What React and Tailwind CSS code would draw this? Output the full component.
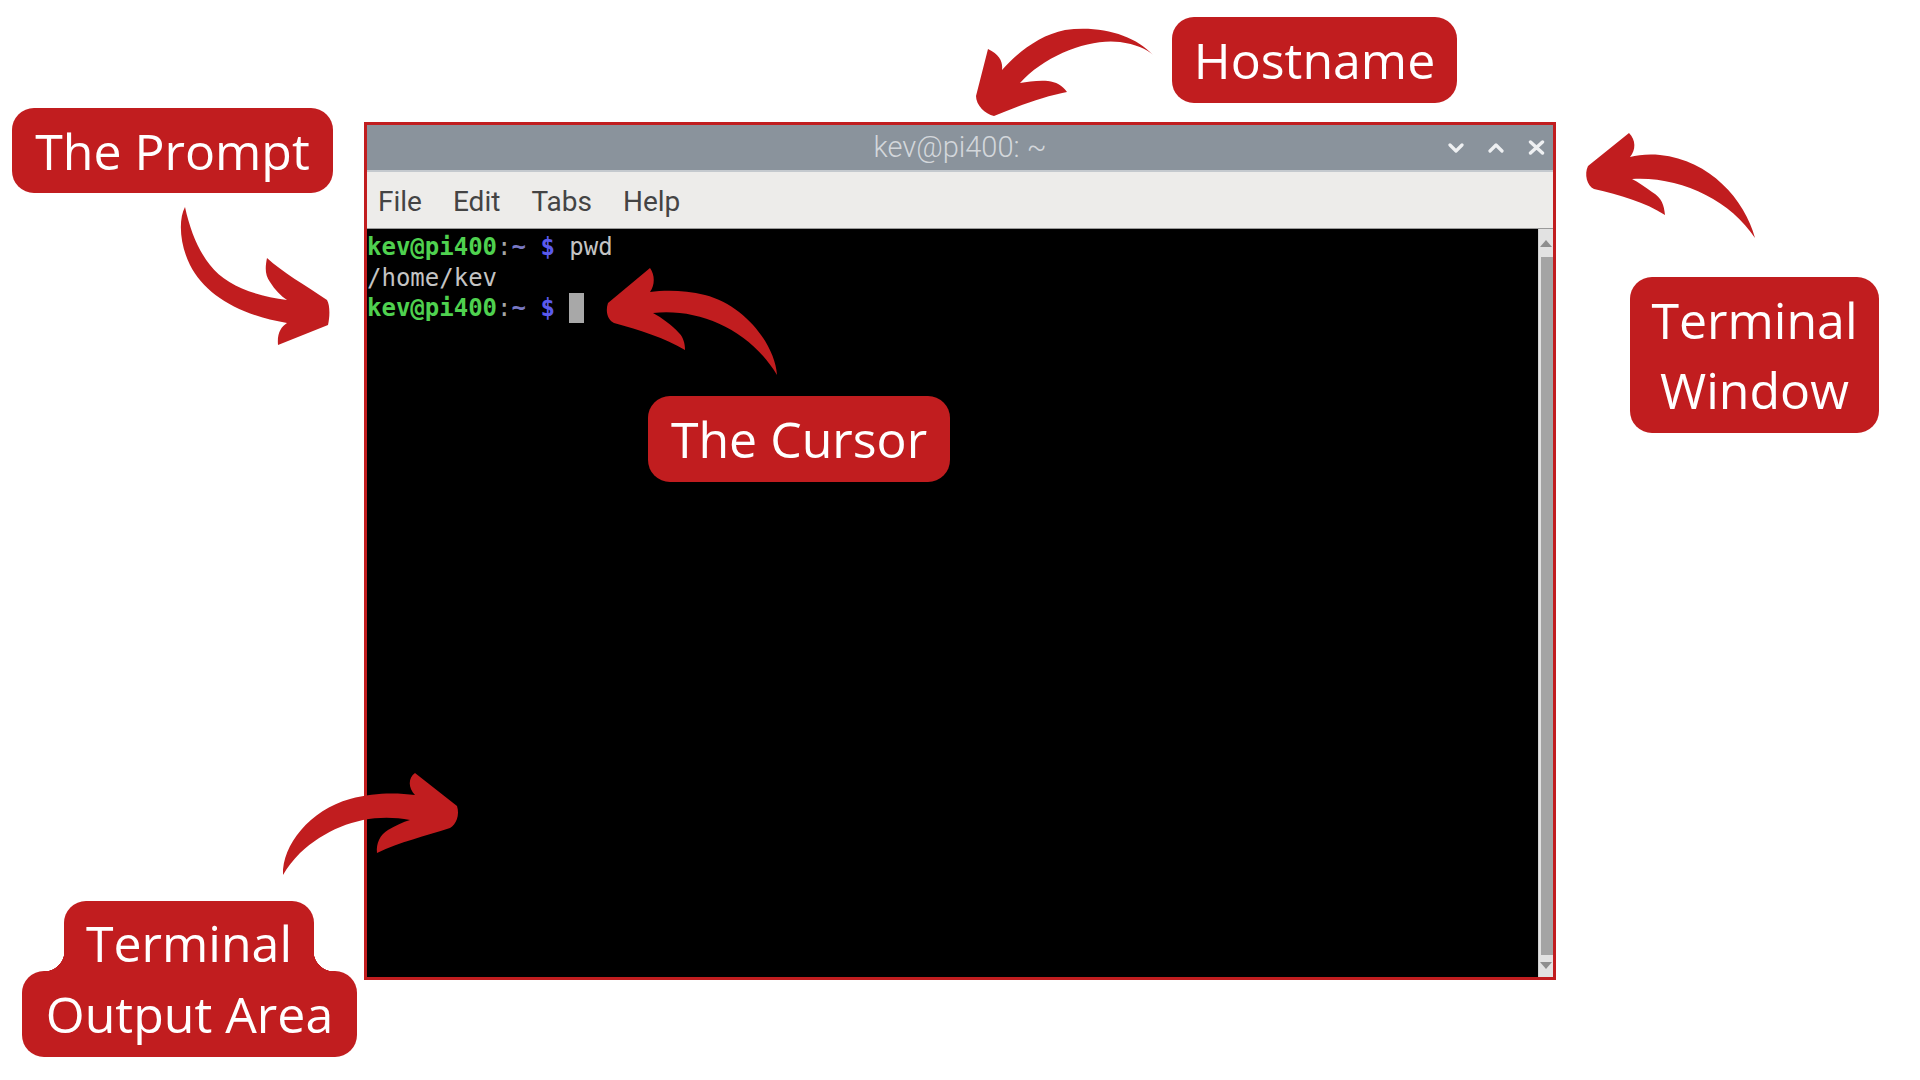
import React from 'react';

// callout arrows, drawn in page coordinates
const arrows = [
  // hostname
  'M 1153 55 C 1135 35 1100 25 1065 30 C 1040 35 1018 52 1002 70 C 1003 62 1000 55 988 49 L 976 96 C 976 105 985 114 994 116 C 1018 106 1045 96 1067 92 C 1062 85 1056 82 1048 81 C 1038 80 1028 82 1020 83 C 1045 55 1090 38 1120 42 C 1135 44 1147 49 1153 55 Z',
  // prompt
  'M 185 207 C 178 220 180 245 190 265 C 205 295 240 315 287 323 C 281 327 277 333 278 345 L 328 325 C 330 316 330 305 327 300 C 305 285 282 272 267 258 C 265 268 265 275 270 282 C 275 290 281 296 287 300 C 255 296 225 285 210 265 C 198 250 190 230 185 207 Z',
  // terminal window
  'M 1755 238 C 1745 200 1710 160 1660 155 C 1648 154 1638 155 1630 157 C 1636 150 1636 140 1629 133 L 1588 166 C 1584 174 1587 186 1594 189 C 1620 195 1645 202 1665 215 C 1664 205 1662 198 1652 192 C 1645 187 1638 182 1632 179 C 1680 176 1730 200 1755 238 Z',
  // cursor
  'M 777 375 C 775 345 745 305 705 295 C 685 290 665 290 650 292 C 655 285 655 275 650 268 L 608 303 C 605 312 608 320 614 323 C 640 330 665 338 685 350 C 685 343 683 337 679 333 C 672 325 662 318 653 313 C 700 308 750 330 777 375 Z',
  // output area
  'M 283 875 C 282 845 310 810 350 799 C 375 792 398 793 415 795 C 408 788 408 778 415 773 L 457 806 C 460 815 456 825 450 828 C 425 836 400 842 377 853 C 376 843 380 835 388 830 C 395 826 403 822 410 820 C 370 812 330 825 300 853 C 293 860 287 868 283 875 Z',
];

const menu = ['File', 'Edit', 'Tabs', 'Help'];

const TitleControls = () => (
  <div className="flex items-center gap-[24px] pr-[8px]">
    <svg width="16" height="10" viewBox="0 0 16 10">
      <path d="M2 2 L8 8 L14 2" fill="none" stroke="#eef0f2" strokeWidth="3.2" strokeLinecap="round" strokeLinejoin="round" />
    </svg>
    <svg width="16" height="10" viewBox="0 0 16 10">
      <path d="M2 8 L8 2 L14 8" fill="none" stroke="#eef0f2" strokeWidth="3.2" strokeLinecap="round" strokeLinejoin="round" />
    </svg>
    <svg width="17" height="15" viewBox="0 0 17 15">
      <path d="M2.5 2 L14.5 13 M14.5 2 L2.5 13" fill="none" stroke="#eef0f2" strokeWidth="3.4" strokeLinecap="round" />
    </svg>
  </div>
);

const Prompt = () => (
  <>
    <span className="font-bold text-[#4fd14f]">kev@pi400</span>
    <span className="text-[#a4a4a4]">:</span>
    <span className="font-bold text-[#7878c4]">~</span>
    <span> </span>
    <span className="font-bold text-[#5a5aee]">$</span>
    <span> </span>
  </>
);

const Terminal = () => (
  <div className="w-[1192px] h-[858px] border-[3px] border-[#c11d1f] flex flex-col bg-black">
    <div className="h-[47px] bg-[#8a939c] border-b-2 border-[#c4c9ce] relative flex items-center justify-end">
      <span className="absolute inset-0 flex items-center justify-center font-['Roboto',sans-serif] font-light text-[29px] text-[#d3d7db]">
        kev@pi400: ~
      </span>
      <TitleControls />
    </div>
    <div className="h-[57px] bg-[#edecea] border-b border-[#9a9a9a] flex items-center gap-[31px] pl-[11px] pt-[4px] font-['Roboto',sans-serif] text-[28px] text-[#444444]">
      {menu.map((m) => (
        <span key={m}>{m}</span>
      ))}
    </div>
    <div className="flex-1 flex min-h-0">
      <div className="flex-1 pt-[3px] font-['DejaVu_Sans_Mono',monospace] text-[24px] leading-[30.5px] text-[#c4c4c4] whitespace-pre">
        <div>
          <Prompt />
          <span>pwd</span>
        </div>
        <div>/home/kev</div>
        <div className="flex items-center">
          <Prompt />
          <span className="inline-block w-[15px] h-[30px] bg-[#a8a8a8]"></span>
        </div>
      </div>
      <div className="w-[15px] bg-[#e2e2e2] border-l border-[#d0d0d0] flex flex-col">
        <div className="h-[28px] flex items-center justify-center">
          <svg width="12" height="8" viewBox="0 0 12 8">
            <path d="M0 8 L6 1 L12 8 Z" fill="#8e8e8e" />
          </svg>
        </div>
        <div className="flex-1 bg-[#a4a4a4] ml-[2px]"></div>
        <div className="h-[22px] flex items-center justify-center">
          <svg width="12" height="8" viewBox="0 0 12 8">
            <path d="M0 0 L6 7 L12 0 Z" fill="#8e8e8e" />
          </svg>
        </div>
      </div>
    </div>
  </div>
);

const Label = ({ className, children }) => (
  <div
    className={`absolute bg-[#c11d1f] rounded-[22px] flex flex-col items-center justify-center text-white text-[50px] leading-[70px] font-['Open_Sans',sans-serif] ${className}`}
  >
    {children}
  </div>
);

export default function App() {
  return (
    <div className="relative w-[1920px] h-[1080px] bg-white overflow-hidden">
      <div className="pt-[122px] pl-[364px]">
        <Terminal />
      </div>

      <Label className="left-[1172px] top-[17px] w-[285px] h-[86px]">Hostname</Label>
      <Label className="left-[12px] top-[108px] w-[321px] h-[85px]">The Prompt</Label>
      <Label className="left-[648px] top-[396px] w-[302px] h-[86px]">The Cursor</Label>
      <Label className="left-[1630px] top-[277px] w-[249px] h-[156px]">
        <span>Terminal</span>
        <span>Window</span>
      </Label>

      <div className="absolute left-[22px] top-[901px] w-[335px] flex flex-col text-white text-[50px] leading-[49px] font-['Open_Sans',sans-serif]">
        <div className="flex items-end">
          <div className="ml-[22px] w-[20px] h-[20px] bg-[radial-gradient(circle_at_0_0,transparent_20px,#c11d1f_20.5px)]"></div>
          <div className="w-[250px] h-[70px] bg-[#c11d1f] rounded-t-[22px] flex justify-center pt-[18px]">Terminal</div>
          <div className="w-[20px] h-[20px] bg-[radial-gradient(circle_at_100%_0,transparent_20px,#c11d1f_20.5px)]"></div>
        </div>
        <div className="w-[335px] h-[86px] bg-[#c11d1f] rounded-[22px] flex items-center justify-center">Output Area</div>
      </div>

      <svg className="absolute inset-0 pointer-events-none" width="1920" height="1080" viewBox="0 0 1920 1080">
        {arrows.map((d, i) => (
          <path key={i} d={d} fill="#c11d1f" />
        ))}
      </svg>
    </div>
  );
}
